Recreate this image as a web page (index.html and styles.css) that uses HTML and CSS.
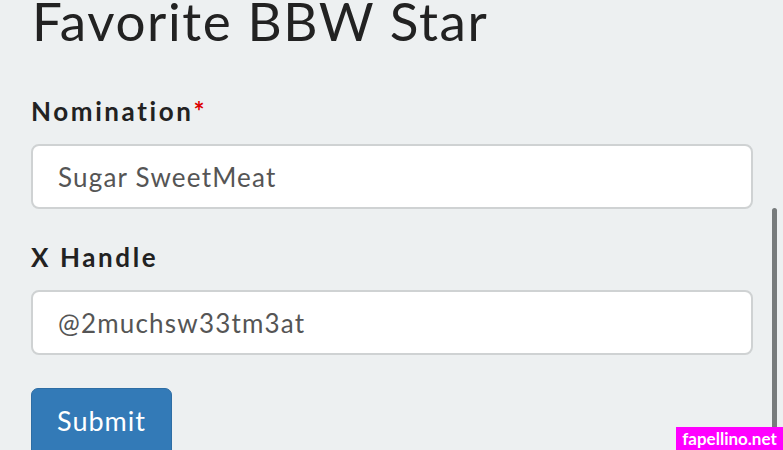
FILE: index.html
```html
<!DOCTYPE html>
<html>
<head>
<meta charset="utf-8">
<link rel="stylesheet" href="styles.css">
</head>
<body>
<div class="page">
  <h1 class="title">Favorite BBW Star</h1>
  <form class="form">
    <div class="group">
      <label class="label">Nomination<span class="req">*</span></label>
      <div class="input">Sugar SweetMeat</div>
    </div>
    <div class="group">
      <label class="label">X Handle</label>
      <div class="input">@2muchsw33tm3at</div>
    </div>
    <button type="button" class="btn">Submit</button>
  </form>
</div>
<div class="scrollbar"></div>
<div class="watermark">fapellino.net</div>
</body>
</html>
```
FILE: styles.css
```css
html, body {
  margin: 0;
  padding: 0;
  background: #edf0f1;
  height: 100%;
  overflow: hidden;
}
body {
  font-family: Lato, "Open Sans", sans-serif;
  color: #222;
  position: relative;
}
.page {
  padding: 0 30px 0 31px;
}
.title {
  margin: -10px 0 0 1px;
  font-size: 53px;
  font-weight: 400;
  line-height: 62px;
  letter-spacing: 1.6px;
  color: #222;
}
.form {
  display: flex;
  flex-direction: column;
  margin-top: 43px;
}
.group {
  display: flex;
  flex-direction: column;
  margin-bottom: 32px;
}
.label {
  font-size: 26px;
  font-weight: 700;
  letter-spacing: 2.6px;
  line-height: 32px;
  color: #222;
  margin-bottom: 17px;
}
.req { color: #d00; letter-spacing: 0; }
.input {
  box-sizing: border-box;
  height: 65px;
  border: 2px solid #cfd2d3;
  border-radius: 8px;
  background: #fff;
  padding-left: 25px;
  display: flex;
  align-items: center;
  font-size: 26px;
  letter-spacing: 1.2px;
  color: #555;
}
.btn {
  align-self: flex-start;
  margin-top: 1px;
  width: 141px;
  height: 76px;
  border: 1px solid #2e6da4;
  border-radius: 7px;
  background: #337ab7;
  color: #fff;
  font-family: Lato, "Open Sans", sans-serif;
  font-size: 27px;
  letter-spacing: 1px;
  padding: 0 0 12px 0;
}
.scrollbar {
  position: absolute;
  left: 772px;
  top: 208px;
  width: 5px;
  height: 260px;
  border-radius: 3px;
  background: #777b7c;
}
.watermark {
  position: absolute;
  right: 0;
  top: 427px;
  width: 107px;
  height: 23px;
  background: #ff00ff;
  color: #fff;
  font-family: Lato, sans-serif;
  font-weight: 700;
  font-size: 17px;
  line-height: 23px;
  text-align: center;
}
```
